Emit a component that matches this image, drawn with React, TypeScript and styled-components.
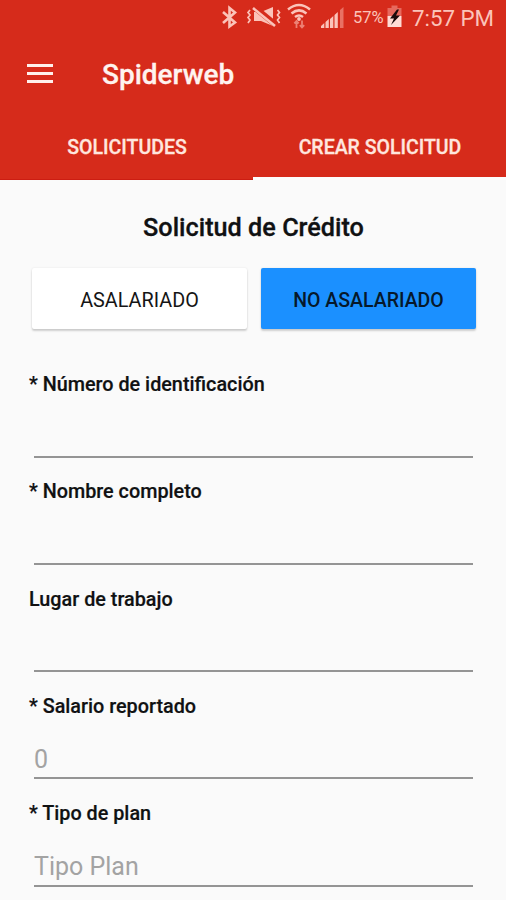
import React from "react";
import styled, { createGlobalStyle } from "styled-components";

const GlobalStyle = createGlobalStyle`
  * { box-sizing: border-box; }
  html, body { margin: 0; padding: 0; background: #fafafa; overflow: hidden; }
  body, button, input { font-family: Roboto, "Liberation Sans", sans-serif; }
`;

const Screen = styled.main`
  width: 506px;
  height: 900px;
  overflow: hidden;
  background: #fafafa;
  color: #101112;
`;

const Header = styled.header`
  height: 180px;
  background: #d62b1b;
  border-bottom: 1px solid #cc1d12;
`;

const StatusBar = styled.div`
  height: 36px;
  display: flex;
  justify-content: flex-end;
  padding-right: 12px;
  color: #fbc3b9;
`;

const StatusIcons = styled.svg`
  width: 133px;
  height: 36px;
  flex: none;
`;

const BatteryIcon = styled.svg`
  width: 26px;
  height: 36px;
  flex: none;
`;

const StatusText = styled.span<{ $size: number; $width: number }>`
  width: ${(p) => p.$width}px;
  font-size: ${(p) => p.$size}px;
  line-height: 36px;
  white-space: nowrap;
`;

const Toolbar = styled.div`
  height: 76px;
  display: flex;
  align-items: center;
  padding-left: 26px;
`;

const MenuButton = styled.button`
  width: 28px;
  height: 22px;
  padding: 0;
  border: 0;
  background: none;
  display: flex;
  margin-right: 48px;
`;

const AppTitle = styled.h1`
  margin: 2px 0 0;
  font-size: 28px;
  font-weight: 500;
  line-height: 32px;
  color: #fff3ef;
  -webkit-text-stroke: 0.3px currentColor;
`;

const Tabs = styled.nav`
  height: 68px;
  display: grid;
  grid-template-columns: 1fr 1fr;
`;

const Tab = styled.button<{ $active?: boolean }>`
  border: 0;
  border-bottom: 3px solid ${(p) => (p.$active ? "#fdfdfd" : "transparent")};
  background: none;
  padding: 6px 0 0 1px;
  font-size: 19.5px;
  font-weight: 500;
  color: #ffe6df;
  -webkit-text-stroke: 0.3px currentColor;
`;

const Form = styled.form`
  padding: 30px 30px 0 29px;
`;

const FormTitle = styled.h2`
  margin: 0 0 24px;
  padding: 1px 0 0 2px;
  text-align: center;
  font-size: 25.25px;
  font-weight: 500;
  line-height: 33px;
  -webkit-text-stroke: 0.3px currentColor;
`;

const Choices = styled.div`
  display: grid;
  grid-template-columns: 215px 215px;
  gap: 14px;
  margin: 0 0 42px 3px;
`;

const Choice = styled.button<{ $selected?: boolean }>`
  height: 61px;
  border: 0;
  border-radius: 2px;
  padding: 4px 0 0;
  background: ${(p) => (p.$selected ? "#1b90ff" : "#ffffff")};
  box-shadow: 0 2px 2px rgba(0, 0, 0, 0.17), 0 0 2px rgba(0, 0, 0, 0.1);
  font-size: ${(p) => (p.$selected ? 19.5 : 19.8)}px;
  font-weight: ${(p) => (p.$selected ? 500 : 400)};
  color: ${(p) => (p.$selected ? "#06182b" : "#151515")};
`;

const Field = styled.label`
  display: block;
  height: 107.25px;
`;

const FieldName = styled.span`
  display: block;
  height: 26px;
  line-height: 28px;
  font-size: 19.8px;
  font-weight: 500;
  white-space: nowrap;
  -webkit-text-stroke: 0.2px currentColor;
`;

const FieldInput = styled.input`
  display: block;
  width: 439px;
  height: 60.5px;
  margin-left: 5px;
  padding: 23px 0 0;
  border: 0;
  border-bottom: 2px solid #949494;
  border-radius: 0;
  outline: 0;
  background: none;
  font-size: 25px;
  &::placeholder { color: #a3a3a3; opacity: 1; }
`;

const fields = [
  { name: "* Número de identificación", hint: "" },
  { name: "* Nombre completo", hint: "" },
  { name: "Lugar de trabajo", hint: "" },
  { name: "* Salario reportado", hint: "0" },
  { name: "* Tipo de plan", hint: "Tipo Plan" },
];

function ConnectionIcons() {
  return (
    <StatusIcons viewBox="0 0 133 36" fill="none" stroke="currentColor">
      <path d="M3 12 15 22.500 9.500 26.500V8L15 12.500 3 23" strokeWidth="2.600" />
      <path
        d="M30 10l-2 2.500 2 2.500-2 2.500 2 2.500-2 3M57.500 10l2 2.500-2 2.500 2 2.500-2 2.500 2 3"
        strokeWidth="1.700"
      />
      <path d="M34 12h7l12-5v19l-12-5h-7z" fill="currentColor" stroke="none" />
      <path d="M33 6 56 25" stroke="#d62b1b" strokeWidth="6" />
      <path d="M33 8 55 26" strokeWidth="2.600" />
      <path d="M68 9.500q11-9 22 0M71.500 13.400q7.500-6 15 0M75 17q4-3 8 0" strokeWidth="2.500" />
      <circle cx="79" cy="19" r="1.900" fill="currentColor" stroke="none" />
      <path
        d="M76.500 28v-7M74.300 23.300l2.200-2.300 2.200 2.300M82 20.500v7M79.800 25.200l2.200 2.300 2.200-2.300"
        stroke="#ed8174"
        strokeWidth="1.800"
      />
      <g fill="currentColor" stroke="none">
        <path d="M101 28v-2l3.300-3v5zM105.500 28v-6l3.300-3v9zM110 28v-9l3.300-3v12zM114.500 28V15l3.300-3v16z" />
        <path d="M120 28V10l3.500-3v21z" fill="#e97164" />
      </g>
    </StatusIcons>
  );
}

function Battery() {
  return (
    <BatteryIcon viewBox="0 0 26 36">
      <path d="M5.500 8V5.500h6V8h4v8h-14V8z" fill="#e7695d" />
      <path d="M1.500 16h14v11h-14z" fill="#ffdcd5" />
      <path d="M11 9.500 4 18.500h4l-3 6.500 9-9.500h-4l3-6z" fill="#1b0b0b" />
    </BatteryIcon>
  );
}

export default function App() {
  return (
    <Screen>
      <GlobalStyle />
      <Header>
        <StatusBar>
          <ConnectionIcons />
          <StatusText $size={16.5} $width={33}>57%</StatusText>
          <Battery />
          <StatusText $size={22.3} $width={82}>7:57 PM</StatusText>
        </StatusBar>
        <Toolbar>
          <MenuButton aria-label="Menú">
            <svg width="28" height="22" viewBox="0 0 28 22" fill="#fff0ec">
              <path d="M1 1h26v3H1zM1 9h26v3H1zM1 17h26v3H1z" />
            </svg>
          </MenuButton>
          <AppTitle>Spiderweb</AppTitle>
        </Toolbar>
        <Tabs>
          <Tab>SOLICITUDES</Tab>
          <Tab $active>CREAR SOLICITUD</Tab>
        </Tabs>
      </Header>
      <Form>
        <FormTitle>Solicitud de Crédito</FormTitle>
        <Choices>
          <Choice type="button">ASALARIADO</Choice>
          <Choice type="button" $selected>NO ASALARIADO</Choice>
        </Choices>
        {fields.map((field) => (
          <Field key={field.name}>
            <FieldName>{field.name}</FieldName>
            <FieldInput placeholder={field.hint} />
          </Field>
        ))}
      </Form>
    </Screen>
  );
}
